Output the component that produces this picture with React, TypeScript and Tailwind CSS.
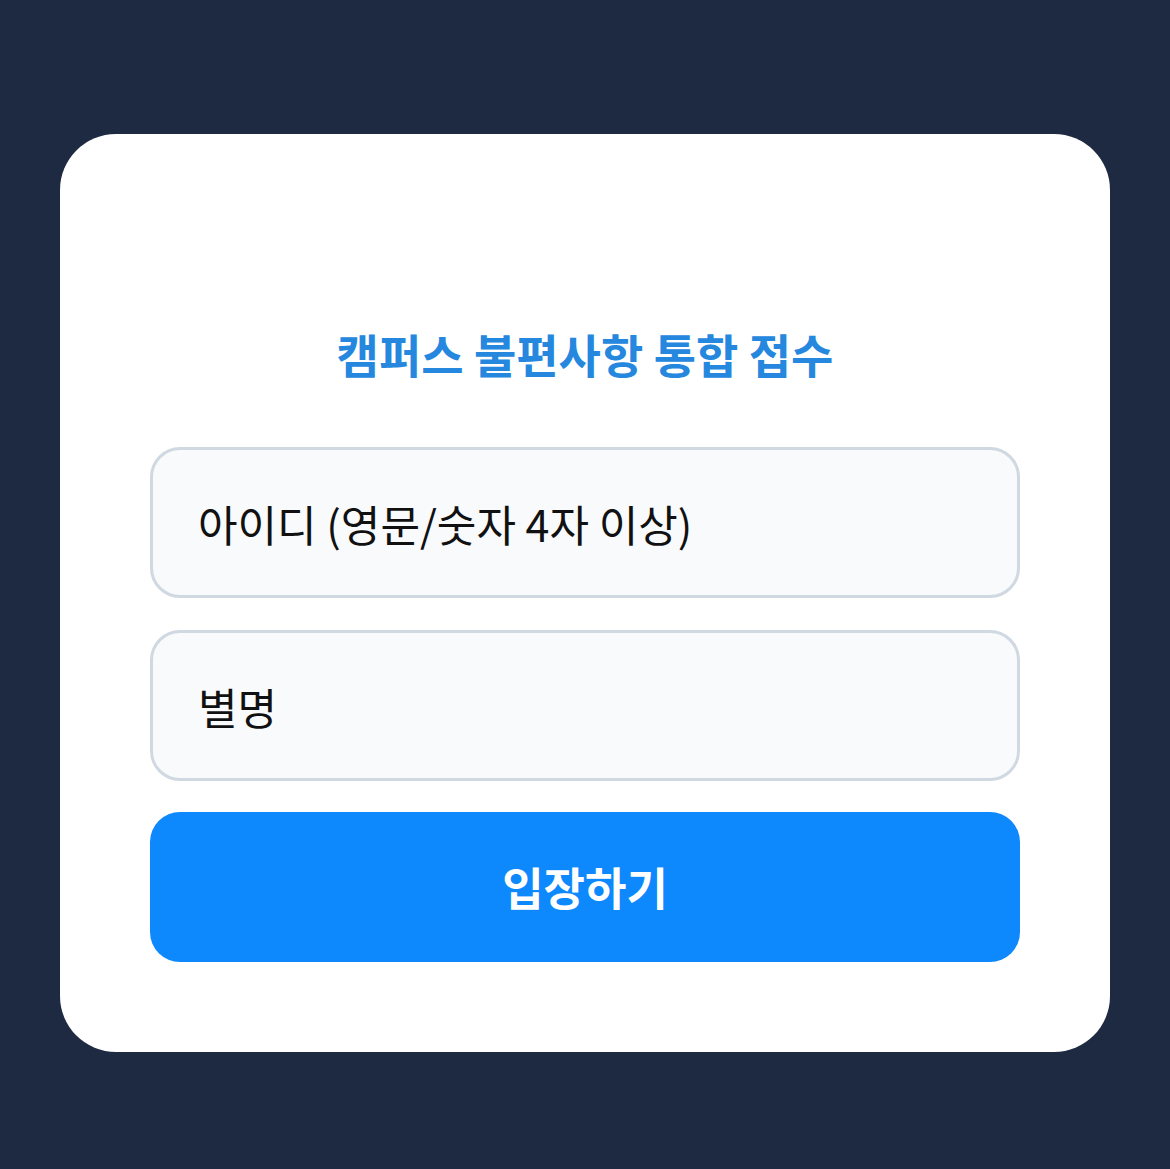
import React from "react";

export default function App() {
  return (
    <div
      className="min-h-[1169px] w-full bg-[#1d2a41] px-[60px] pt-[134px] pb-[117px]"
      style={{ fontFamily: '"Noto Sans CJK KR", "Noto Sans", sans-serif' }}
    >
      <div className="flex flex-col rounded-[56px] bg-white px-[90px] pt-[188px] pb-[90px]">
        <h1 className="text-center text-[46px] leading-[63px] font-bold text-[#2588de]">
          캠퍼스 불편사항 통합 접수
        </h1>
        <div className="mt-[62px] flex flex-col gap-[32px]">
          <input
            type="text"
            placeholder="아이디 (영문/숫자 4자 이상)"
            className="h-[151px] w-full rounded-[30px] border-[3px] border-[#d0d8e1] bg-[#f8fafc] px-[45px] text-[43px] text-[#111] outline-none placeholder:text-[#111]"
          />
          <input
            type="text"
            placeholder="별명"
            className="h-[151px] w-full rounded-[30px] border-[3px] border-[#d0d8e1] bg-[#f8fafc] px-[45px] text-[43px] text-[#111] outline-none placeholder:text-[#111]"
          />
          <button
            type="button"
            className="-mt-[1px] h-[150px] w-full rounded-[30px] bg-[#0e88fd] text-[45px] font-bold text-white"
          >
            입장하기
          </button>
        </div>
      </div>
    </div>
  );
}
